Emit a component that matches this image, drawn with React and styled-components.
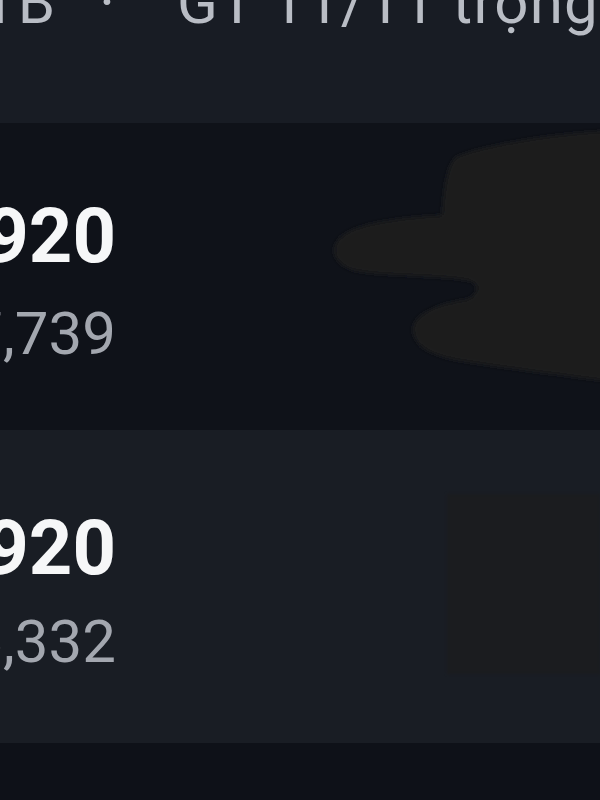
import React from 'react'
import styled, { createGlobalStyle } from 'styled-components'

const Global = createGlobalStyle`
  html, body { margin: 0; padding: 0; background: #0e1118; }
  body { font-family: Roboto, "Noto Sans", "Liberation Sans", sans-serif; }
`

const Page = styled.div`
  width: 600px;
  height: 800px;
  overflow: hidden;
  display: flex;
  flex-direction: column;
  background: #0e1118;
`

const Header = styled.header`
  height: 123px;
  flex-shrink: 0;
  background: #181c24;
  overflow: hidden;
`

const Meta = styled.div`
  display: flex;
  align-items: baseline;
  white-space: nowrap;
  margin: -27px 0 0 -18px;
  font-size: 60px;
  line-height: 60px;
  color: #b9bdc5;
`

const Sep = styled.span`
  margin: 0 62px 0 44px;
`

const Rest = styled.span`
  letter-spacing: 1.2px;
`

const Card = styled.section`
  height: ${p => p.h}px;
  flex-shrink: 0;
  background: ${p => p.bg};
  display: flex;
  justify-content: space-between;
  overflow: hidden;
`

const Figures = styled.div`
  width: 116px;
  flex-shrink: 0;
  display: flex;
  flex-direction: column;
  align-items: flex-end;
  padding-top: ${p => p.top}px;
  gap: ${p => p.gap}px;
`

const Price = styled.div`
  font-size: 76px;
  line-height: 76px;
  font-weight: 700;
  color: #f6f7f8;
  white-space: nowrap;
`

const Volume = styled.div`
  font-size: 60px;
  line-height: 60px;
  color: #a3a7af;
  white-space: nowrap;
`

const Thumb = styled.div`
  width: ${p => p.w}px;
  display: flex;
  align-items: ${p => p.align};
  padding-top: ${p => p.pt || 0}px;
  box-sizing: border-box;
`

const Photo = styled.div`
  width: 153px;
  height: 180px;
  background: #1b1c1f;
  filter: blur(1.5px);
`

const Footer = styled.footer`
  flex: 1;
  background: #0e1118;
`

const Blob = () => (
  <svg width="280" height="307" viewBox="0 0 280 307">
    <defs>
      <filter id="soft" x="-10%" y="-10%" width="120%" height="120%">
        <feGaussianBlur stdDeviation="2" />
      </filter>
    </defs>
    <path
      d="M284 8 C220 12 170 22 140 32 C128 36 124 60 122 92 C90 94 50 98 30 108 C8 118 8 140 35 148 C70 154 120 152 150 158 C160 162 158 170 148 176 C120 180 95 190 93 205 C92 225 115 233 140 238 C190 246 240 252 284 258 Z"
      fill="#1b1c1e"
      filter="url(#soft)"
    />
  </svg>
)

export default function App() {
  return (
    <Page>
      <Global />
      <Header>
        <Meta>
          <span>TB</span>
          <Sep>·</Sep>
          <Rest>GT 11/11 trọng số</Rest>
        </Meta>
      </Header>
      <Card h={307} bg="#0f1219">
        <Figures top={75} gap={30}>
          <Price>1,920</Price>
          <Volume>17,739</Volume>
        </Figures>
        <Thumb w={280}>
          <Blob />
        </Thumb>
      </Card>
      <Card h={313} bg="#191d24">
        <Figures top={80} gap={26}>
          <Price>1,920</Price>
          <Volume>26,332</Volume>
        </Figures>
        <Thumb w={153} align="flex-start" pt={64}>
          <Photo />
        </Thumb>
      </Card>
      <Footer />
    </Page>
  )
}
